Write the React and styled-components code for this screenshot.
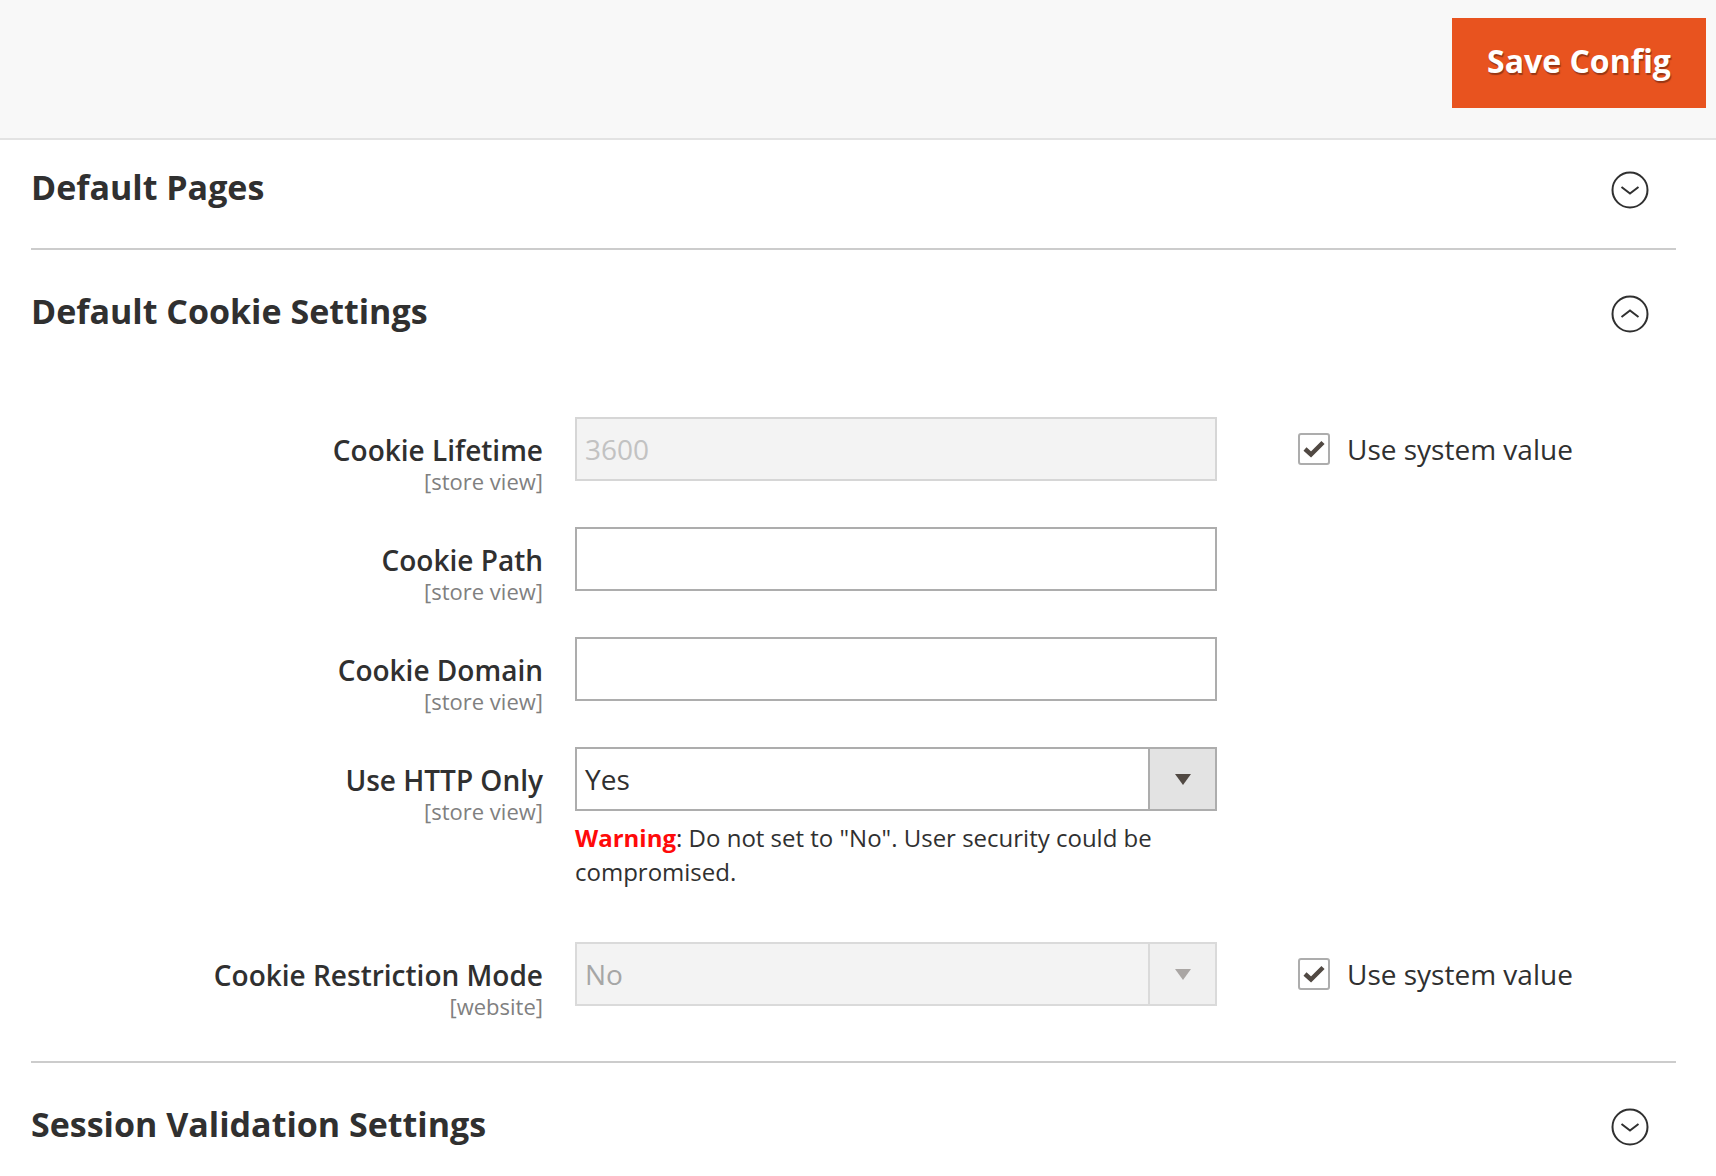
import React from "react";
import styled, { createGlobalStyle } from "styled-components";

const Global = createGlobalStyle`
  html, body { margin: 0; padding: 0; background: #ffffff; }
  body { font-family: "Open Sans", "Liberation Sans", sans-serif; color: #303030; }
  * { box-sizing: border-box; }
`;

const PageActions = styled.header`
  display: flex;
  justify-content: flex-end;
  align-items: flex-start;
  height: 140px;
  padding: 18px 10px 0 0;
  background: #f8f8f8;
  border-bottom: 2px solid #e3e3e3;
`;

const PrimaryButton = styled.button`
  width: 254px;
  height: 90px;
  border: 0;
  padding: 0 0 5px;
  background: #e8531f;
  color: #ffffff;
  font-family: "Open Sans", "Liberation Sans", sans-serif;
  font-weight: 700;
  font-size: 32px;
  text-shadow: 1px 2px 1px rgba(0, 0, 0, 0.35);
  cursor: pointer;
`;

const Content = styled.main`
  padding: 0 40px 0 31px;
`;

const Section = styled.section`
  border-top: ${(p) => (p.$first ? "0" : "2px solid #cccccc")};
`;

const SectionHead = styled.div`
  display: flex;
  align-items: center;
  justify-content: space-between;
  height: ${(p) => (p.$first ? "108px" : "122px")};
  padding: ${(p) => (p.$first ? "0 27px 14px 0" : "0 27px 0 0")};
`;

const SectionTitle = styled.h2`
  margin: 0;
  font-size: 34px;
  font-weight: 700;
  color: #303030;
`;

const IconWrap = styled.span`
  display: flex;
  margin-top: 5px;
`;

const Fieldset = styled.div`
  display: flex;
  flex-direction: column;
  gap: 32px;
  padding: 45px 0 41px;
`;

const Row = styled.div`
  display: grid;
  grid-template-columns: 512px 642px 1fr;
  column-gap: 32px;
  align-items: start;
`;

const LabelCell = styled.div`
  text-align: right;
  padding-top: 16px;
`;

const LabelText = styled.div`
  font-size: 28px;
  font-weight: 600;
  line-height: 34px;
  color: #303030;
`;

const Scope = styled.div`
  font-size: 22px;
  line-height: 28px;
  color: #808080;
`;

const Control = styled.div`
  display: flex;
  flex-direction: column;
`;

const TextInput = styled.div`
  height: 64px;
  display: flex;
  align-items: center;
  padding: 0 8px;
  border: 2px solid ${(p) => (p.$disabled ? "#d6d6d6" : "#adadad")};
  background: ${(p) => (p.$disabled ? "#f3f3f3" : "#ffffff")};
  color: ${(p) => (p.$disabled ? "#c2c2c2" : "#303030")};
  font-size: 28px;
`;

const SelectBox = styled.div`
  height: 64px;
  display: flex;
  align-items: stretch;
  border: 2px solid ${(p) => (p.$disabled ? "#dadada" : "#adadad")};
  background: ${(p) => (p.$disabled ? "#f3f3f3" : "#ffffff")};
`;

const SelectValue = styled.div`
  flex: 1;
  display: flex;
  align-items: center;
  padding: 0 8px;
  font-size: 28px;
  color: ${(p) => (p.$disabled ? "#a6a6a6" : "#303030")};
`;

const SelectArrow = styled.div`
  width: 67px;
  display: flex;
  align-items: center;
  justify-content: center;
  border-left: 2px solid ${(p) => (p.$disabled ? "#dadada" : "#adadad")};
  background: ${(p) => (p.$disabled ? "#f0f0f0" : "#e3e3e3")};
  &::after {
    content: "";
    width: 0;
    height: 0;
    border-left: 8px solid transparent;
    border-right: 8px solid transparent;
    border-top: 11px solid ${(p) => (p.$disabled ? "#aaa6a4" : "#514943")};
  }
`;

const Note = styled.p`
  margin: 10px 0 21px;
  font-size: 24px;
  line-height: 34px;
  color: #303030;
`;

const WarningWord = styled.span`
  color: #ff0a0a;
  font-weight: 700;
`;

const SystemCell = styled.label`
  display: flex;
  align-items: center;
  gap: 17px;
  height: 64px;
  padding-left: 49px;
  font-size: 28px;
  color: #303030;
`;

const CheckBox = styled.span`
  width: 32px;
  height: 32px;
  border: 2px solid #adadad;
  border-radius: 3px;
  background: #ffffff;
  display: flex;
  align-items: center;
  justify-content: center;
`;

const ToggleIcon = ({ up }) => (
  <IconWrap>
    <svg width="38" height="38" viewBox="0 0 38 38" fill="none">
      <circle cx="19" cy="19" r="17.5" stroke="#303030" strokeWidth="2" />
      {up ? (
        <path d="M10.5 22 L19 15.5 L27.5 22" stroke="#303030" strokeWidth="2" />
      ) : (
        <path d="M10.5 16 L19 22.5 L27.5 16" stroke="#303030" strokeWidth="2" />
      )}
    </svg>
  </IconWrap>
);

const Check = () => (
  <CheckBox>
    <svg width="22" height="18" viewBox="0 0 22 18">
      <path d="M2 9 L8 14.5 L20 2.5" stroke="#514943" strokeWidth="4.5" fill="none" />
    </svg>
  </CheckBox>
);

const UseSystem = () => (
  <SystemCell>
    <Check />
    Use system value
  </SystemCell>
);

const Label = ({ text, scope }) => (
  <LabelCell>
    <LabelText>{text}</LabelText>
    <Scope>{scope}</Scope>
  </LabelCell>
);

export default function App() {
  return (
    <>
      <Global />
      <PageActions>
        <PrimaryButton>Save Config</PrimaryButton>
      </PageActions>
      <Content>
        <Section $first>
          <SectionHead $first>
            <SectionTitle>Default Pages</SectionTitle>
            <ToggleIcon />
          </SectionHead>
        </Section>
        <Section>
          <SectionHead>
            <SectionTitle>Default Cookie Settings</SectionTitle>
            <ToggleIcon up />
          </SectionHead>
          <Fieldset>
            <Row>
              <Label text="Cookie Lifetime" scope="[store view]" />
              <Control>
                <TextInput $disabled>3600</TextInput>
              </Control>
              <UseSystem />
            </Row>
            <Row>
              <Label text="Cookie Path" scope="[store view]" />
              <Control>
                <TextInput />
              </Control>
              <div />
            </Row>
            <Row>
              <Label text="Cookie Domain" scope="[store view]" />
              <Control>
                <TextInput />
              </Control>
              <div />
            </Row>
            <Row>
              <Label text="Use HTTP Only" scope="[store view]" />
              <Control>
                <SelectBox>
                  <SelectValue>Yes</SelectValue>
                  <SelectArrow />
                </SelectBox>
                <Note>
                  <WarningWord>Warning</WarningWord>: Do not set to "No". User security could be compromised.
                </Note>
              </Control>
              <div />
            </Row>
            <Row>
              <Label text="Cookie Restriction Mode" scope="[website]" />
              <Control>
                <SelectBox $disabled>
                  <SelectValue $disabled>No</SelectValue>
                  <SelectArrow $disabled />
                </SelectBox>
              </Control>
              <UseSystem />
            </Row>
          </Fieldset>
        </Section>
        <Section>
          <SectionHead>
            <SectionTitle>Session Validation Settings</SectionTitle>
            <ToggleIcon />
          </SectionHead>
        </Section>
      </Content>
    </>
  );
}
